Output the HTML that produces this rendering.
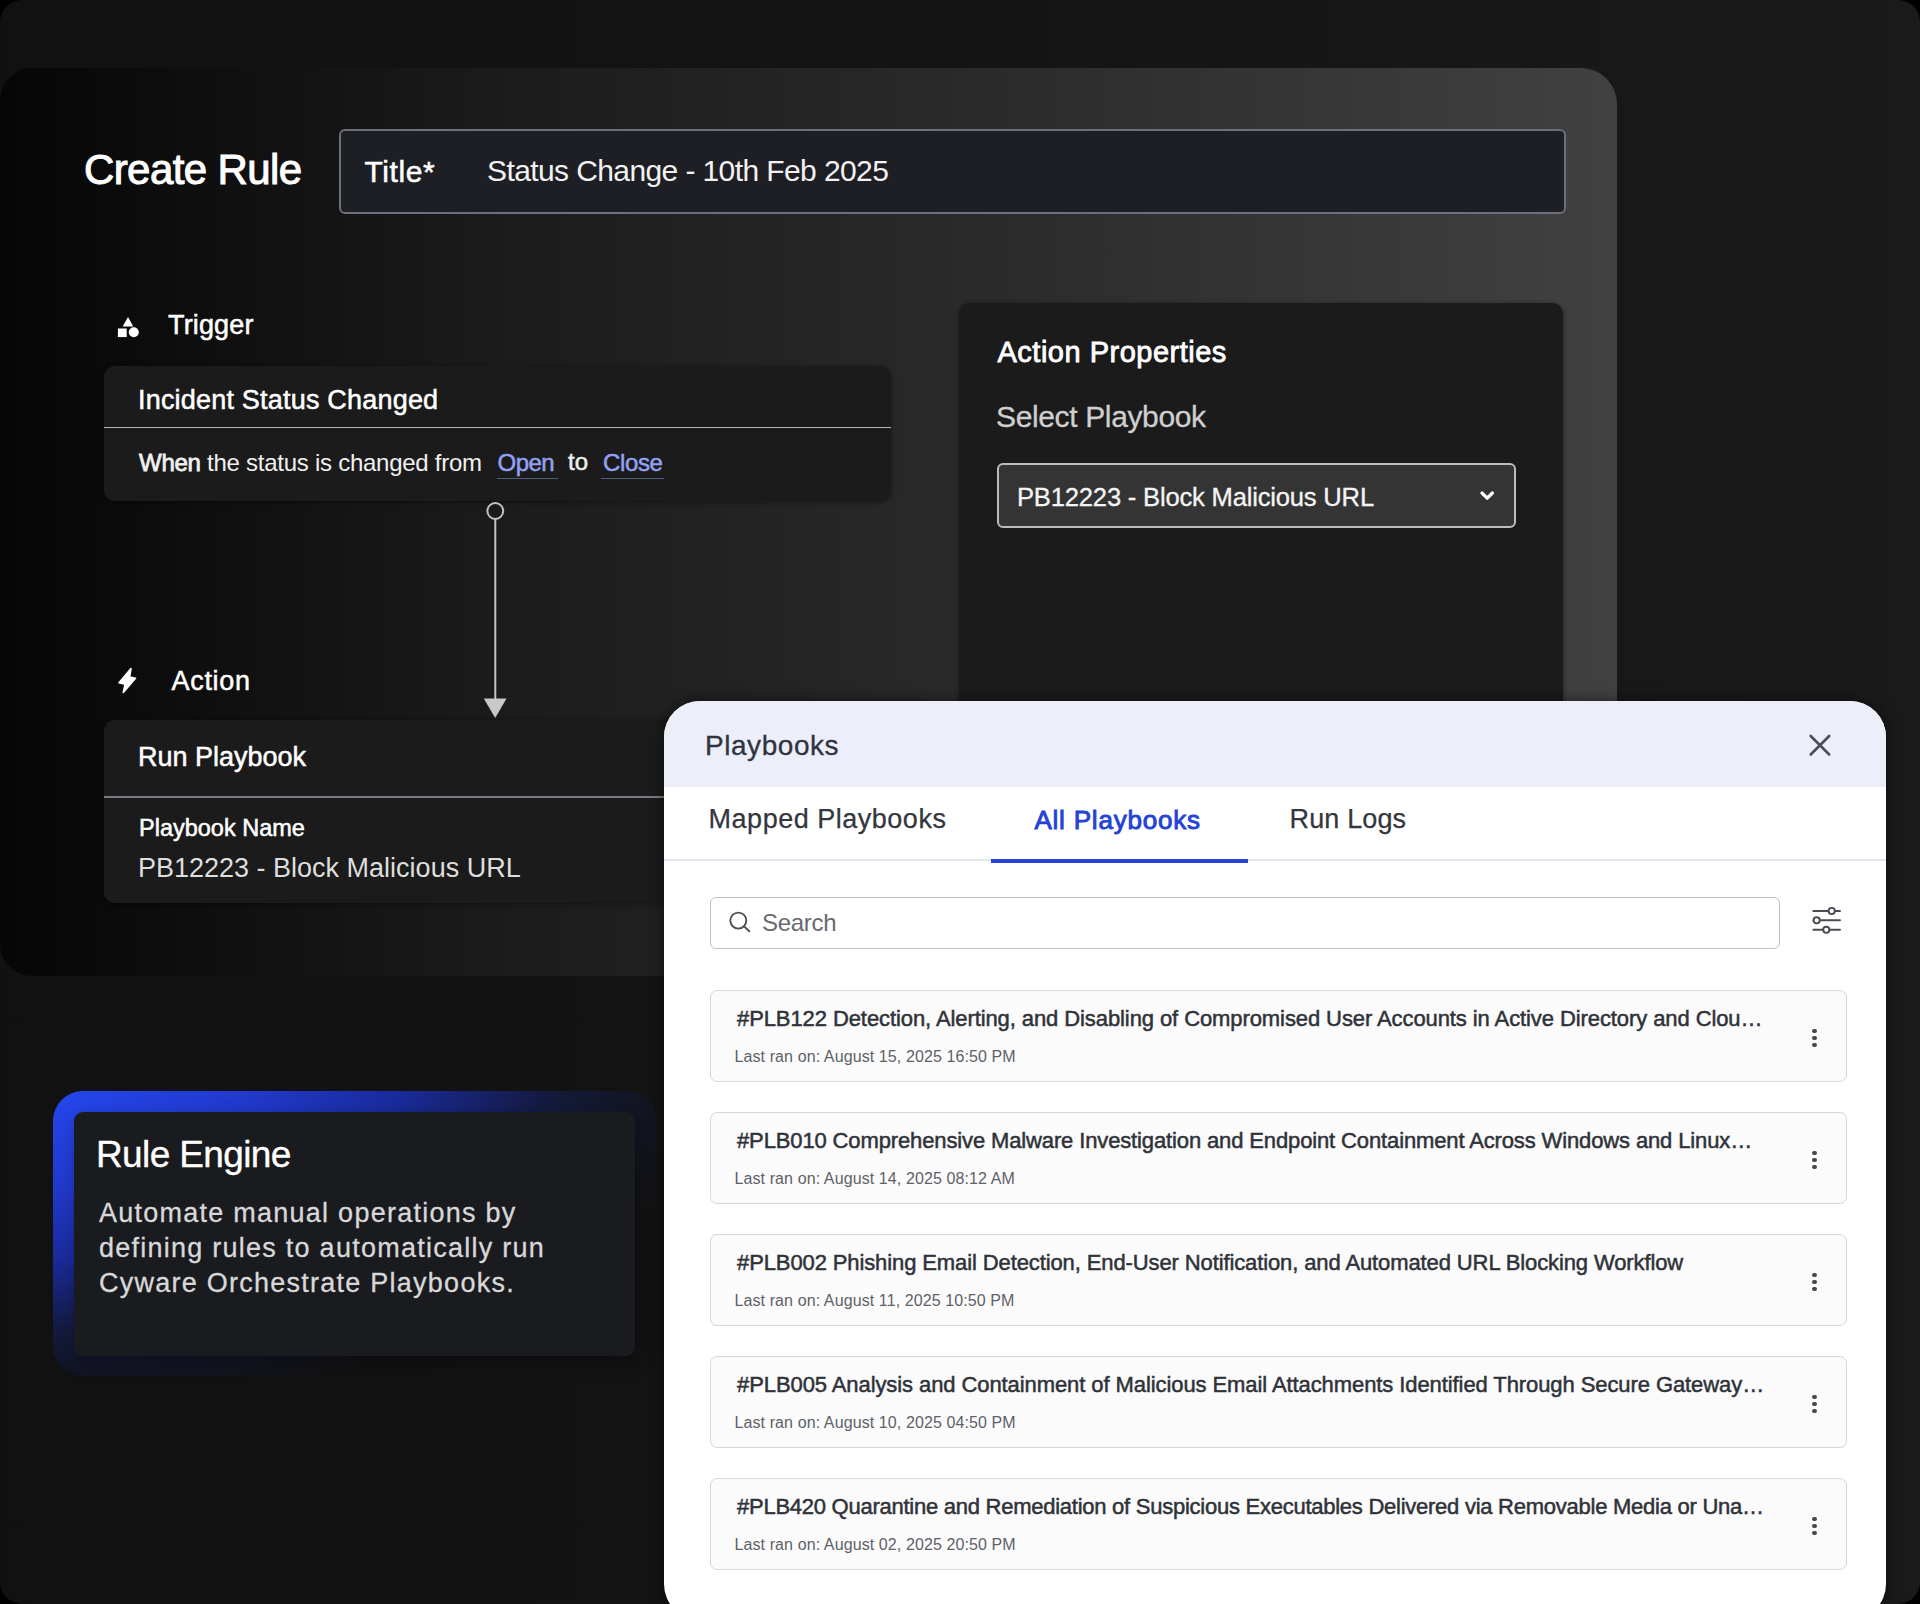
<!DOCTYPE html>
<html><head><meta charset="utf-8">
<style>
html,body{margin:0;padding:0;width:1920px;height:1604px;overflow:hidden;background:#000;}
*{box-sizing:border-box;}
body{font-family:"Liberation Sans",sans-serif;position:relative;}
.a{position:absolute;}
.t{position:absolute;white-space:nowrap;line-height:1;}
#bg{left:0;top:0;width:1920px;height:1604px;border-radius:22px;background:linear-gradient(90deg,#111111 0%,#141414 50%,#1a1a1a 100%);overflow:hidden;}
#main{left:0px;top:68px;width:1617px;height:908px;border-radius:32px 36px 36px 32px;background:linear-gradient(90deg,#060606 0%,#1c1c1c 32%,#2b2b2b 62%,#414141 100%);}
.med{-webkit-text-stroke:0.5px currentColor;}
.card{background:#1b1b1b;border-radius:11px;box-shadow:0 1px 5px rgba(0,0,0,0.45);}
.item{position:absolute;left:710px;width:1137px;height:92px;border:1.5px solid #d6d6db;border-radius:7px;background:#fbfbfc;}
.it{position:absolute;left:26px;top:17.6px;font-size:22px;letter-spacing:-0.09px;color:#2f3238;white-space:nowrap;line-height:1;}
.il{position:absolute;left:23.5px;top:58px;font-size:16px;letter-spacing:0.1px;color:#5f6167;white-space:nowrap;line-height:1;}
.kb{position:absolute;left:1101px;top:37px;width:5px;height:20px;}
.kb i{position:absolute;left:0.4px;width:4.3px;height:4.3px;border-radius:50%;background:#45474e;}
</style></head>
<body>
<div id="bg" class="a">
  <div id="main" class="a"></div>

  <!-- Create Rule title -->
  <div id="h1" class="t" style="left:84px;top:149.4px;font-size:42px;color:#fff;letter-spacing:-0.6px;-webkit-text-stroke:1px #fff;">Create Rule</div>

  <!-- Title input -->
  <div id="titlebox" class="a" style="left:339px;top:129px;width:1227px;height:85px;border:2.5px solid #6d707b;border-radius:6px;background:#1e1f24;"></div>
  <div id="tlabel" class="t med" style="left:364.5px;top:157px;font-size:30px;color:#fff;letter-spacing:0.6px;">Title*</div>
  <div id="tval" class="t" style="left:487px;top:156.3px;font-size:30px;color:#f2f2f2;letter-spacing:-0.6px;">Status Change - 10th Feb 2025</div>

  <!-- Trigger -->
  <svg class="a" style="left:112px;top:312px" width="30" height="30" viewBox="0 0 30 30">
    <polygon points="16,5 21.3,14.5 10.7,14.5" fill="#fff"/>
    <rect x="5.9" y="16.5" width="8.8" height="8.6" fill="#fff"/>
    <circle cx="21.8" cy="20.3" r="5" fill="#fff"/>
  </svg>
  <div id="trig" class="t med" style="left:168px;letter-spacing:0.15px;top:311.9px;font-size:27px;color:#fff;">Trigger</div>

  <div id="inc" class="a card" style="left:104px;top:366px;width:787px;height:135px;"></div>
  <div class="a" style="left:104px;top:426.5px;width:787px;height:1.8px;background:#b8b8b8;"></div>
  <div id="inct" class="t med" style="left:138px;top:386.5px;font-size:27px;letter-spacing:0.2px;color:#fff;">Incident Status Changed</div>
  <div id="when" class="t" style="left:139px;top:451.3px;font-size:24px;letter-spacing:-0.26px;color:#f0f0f0;"><span style="-webkit-text-stroke:0.8px #f0f0f0;">When</span> the status is changed from</div>
  <div id="open" class="t med" style="left:497.5px;top:450.8px;font-size:24px;letter-spacing:-0.5px;color:#93a1f3;">Open</div>
  <div class="a" style="left:497px;top:477.6px;width:61px;height:1.3px;background:#505b80;"></div>
  <div id="to" class="t med" style="left:568px;top:450.3px;font-size:24px;color:#f0f0f0;">to</div>
  <div id="close" class="t med" style="left:603px;top:450.8px;font-size:24px;letter-spacing:-0.35px;color:#93a1f3;">Close</div>
  <div class="a" style="left:601px;top:477.6px;width:63px;height:1.3px;background:#505b80;"></div>

  <!-- connector -->
  <svg class="a" style="left:470px;top:495px" width="50" height="230" viewBox="0 0 50 230">
    <circle cx="25.3" cy="16" r="7.9" fill="none" stroke="#c2c4ca" stroke-width="2"/>
    <line x1="25.3" y1="24" x2="25.3" y2="205" stroke="#c2c4ca" stroke-width="2"/>
    <polygon points="13.8,203.5 36.5,203.5 25.2,223" fill="#c8c8c8"/>
  </svg>

  <!-- Action -->
  <svg class="a" style="left:114px;top:664px" width="26" height="32" viewBox="0 0 26 32">
    <path d="M17 4.5 L5 18.8 L11 20.3 L9.3 28.5 L21.5 14.2 L15.6 13 Z" fill="#fff" stroke="#fff" stroke-width="1.6" stroke-linejoin="round"/>
  </svg>
  <div id="act" class="t med" style="left:171.5px;top:668px;font-size:27px;letter-spacing:0.7px;color:#fff;">Action</div>

  <div id="run" class="a card" style="left:104px;top:719.5px;width:787px;height:183px;"></div>
  <div class="a" style="left:104px;top:795.5px;width:787px;height:2px;background:#7a7a82;"></div>
  <div id="runt" class="t med" style="left:138px;top:744.1px;font-size:27px;color:#fff;">Run Playbook</div>
  <div id="pbn" class="t med" style="left:139px;top:816.6px;font-size:23.5px;letter-spacing:0px;color:#fff;">Playbook Name</div>
  <div id="pbv" class="t" style="left:138px;top:855px;font-size:27px;color:#dedede;">PB12223 - Block Malicious URL</div>

  <!-- Action properties -->
  <div id="ap" class="a card" style="left:959px;top:303px;width:604px;height:560px;"></div>
  <div id="apt" class="t med" style="left:997.5px;top:337.6px;font-size:29px;letter-spacing:0.5px;color:#fff;-webkit-text-stroke:0.8px #fff;">Action Properties</div>
  <div id="sp" class="t" style="left:996px;top:402.4px;letter-spacing:-0.36px;font-size:30px;color:#cfcfcf;-webkit-text-stroke:0.3px #cfcfcf;">Select Playbook</div>
  <div id="dd" class="a" style="left:997px;top:463px;width:519px;height:65px;border:2px solid #bcbcbc;border-radius:6px;background:#343434;"></div>
  <div id="ddt" class="t" style="-webkit-text-stroke:0.3px #f4f4f4;left:1017px;top:484.6px;font-size:25.6px;letter-spacing:-0.2px;color:#f4f4f4;">PB12223 - Block Malicious URL</div>
  <svg class="a" style="left:1477px;top:488px" width="20" height="16" viewBox="0 0 20 16">
    <polyline points="5,5 10.2,10.2 15.4,5" fill="none" stroke="#fff" stroke-width="3.3" stroke-linecap="round" stroke-linejoin="round"/>
  </svg>

  <!-- Rule Engine card -->
  <div id="reframe" class="a" style="left:53px;top:1091px;width:604px;height:285px;border-radius:30px;background:radial-gradient(ellipse 660px 320px at 0 0,#2547ee 0%,#2139cc 30%,#1a2b9c 52%,rgba(20,30,85,0.6) 76%,rgba(17,17,20,0) 98%);"></div>
  <div id="recard" class="a" style="left:74px;top:1112px;width:561px;height:244px;border-radius:9px;background:#1a1b1e;box-shadow:4px 6px 18px rgba(0,0,0,0.35);"></div>
  <div id="ret" class="t med" style="-webkit-text-stroke:0.35px #fff;left:96px;top:1135.5px;font-size:37px;letter-spacing:-0.62px;color:#fff;">Rule Engine</div>
  <div id="reb" class="a" style="left:99px;top:1196px;font-size:27px;line-height:35px;letter-spacing:1.25px;color:#d8d8da;white-space:nowrap;-webkit-text-stroke:0.3px #d8d8da;">Automate manual operations by<br>defining rules to automatically run<br>Cyware Orchestrate Playbooks.</div>

  <!-- Playbooks panel -->
  <div id="panel" class="a" style="left:664px;top:701px;width:1222px;height:919px;border-radius:36px;background:#fff;overflow:hidden;box-shadow:0 0 14px rgba(0,0,0,0.55);">
    <div class="a" style="left:0;top:0;width:1222px;height:86px;background:#eceef9;"></div>
  </div>
  <div id="pbt" class="t" style="-webkit-text-stroke:0.3px #2f3440;left:705px;letter-spacing:0.55px;top:731.9px;font-size:28px;color:#2f3440;">Playbooks</div>
  <svg class="a" style="left:1800px;top:725px" width="40" height="40" viewBox="0 0 40 40">
    <path d="M10.7 11 L29.2 29.5 M29.2 11 L10.7 29.5" stroke="#4a4d57" stroke-width="2.6" stroke-linecap="round"/>
  </svg>
  <div id="tab1" class="t" style="-webkit-text-stroke:0.25px #33363d;left:708.6px;letter-spacing:0.51px;top:806.2px;font-size:27px;color:#33363d;">Mapped Playbooks</div>
  <div id="tab2" class="t" style="-webkit-text-stroke:0.9px #2343d8;left:1034.4px;letter-spacing:0.8px;top:807.3px;font-size:26px;color:#2343d8;">All Playbooks</div>
  <div id="tab3" class="t" style="-webkit-text-stroke:0.25px #33363d;left:1289.6px;letter-spacing:0.13px;top:806.2px;font-size:27px;color:#33363d;">Run Logs</div>
  <div class="a" style="left:664px;top:858.5px;width:1222px;height:2px;background:#e0e3f1;"></div>
  <div class="a" style="left:991px;top:859px;width:257px;height:4px;background:#2343d8;"></div>

  <div id="search" class="a" style="left:710px;top:897px;width:1070px;height:52px;border:1.8px solid #c0c0cc;border-radius:6px;background:#fff;"></div>
  <svg class="a" style="left:724px;top:906px" width="32" height="32" viewBox="0 0 32 32">
    <circle cx="14.3" cy="14.6" r="8" fill="none" stroke="#4f5157" stroke-width="1.9"/>
    <line x1="20.2" y1="20.5" x2="25.3" y2="25.3" stroke="#4f5157" stroke-width="1.9" stroke-linecap="round"/>
  </svg>
  <div id="srch" class="t" style="left:762px;letter-spacing:-0.3px;top:911px;font-size:24px;color:#696a70;">Search</div>
  <svg class="a" style="left:1806px;top:900px" width="40" height="40" viewBox="0 0 40 40">
    <g stroke="#4a4b53" stroke-width="1.9" fill="none" stroke-linecap="round">
      <line x1="7.3" y1="11" x2="34" y2="11"/>
      <line x1="7.3" y1="20.3" x2="34" y2="20.3"/>
      <line x1="7.3" y1="29.8" x2="34" y2="29.8"/>
    </g>
    <g stroke="#4a4b53" stroke-width="1.9" fill="#fff">
      <circle cx="25.7" cy="11" r="3.1"/>
      <circle cx="10.7" cy="20.3" r="3.1"/>
      <circle cx="20.3" cy="29.8" r="3.1"/>
    </g>
  </svg>

  <div class="item" style="top:989.5px;"><div id="i1" class="it med">#PLB122 Detection, Alerting, and Disabling of Compromised User Accounts in Active Directory and Clou…</div><div id="l1" class="il">Last ran on: August 15, 2025 16:50 PM</div><div class="kb"><i style="top:1px"></i><i style="top:8.3px"></i><i style="top:15.6px"></i></div></div>
  <div class="item" style="top:1111.5px;"><div id="i2" class="it med" style="letter-spacing:-0.13px">#PLB010 Comprehensive Malware Investigation and Endpoint Containment Across Windows and Linux…</div><div id="l2" class="il">Last ran on: August 14, 2025 08:12 AM</div><div class="kb"><i style="top:1px"></i><i style="top:8.3px"></i><i style="top:15.6px"></i></div></div>
  <div class="item" style="top:1233.5px;"><div id="i3" class="it med" style="letter-spacing:-0.11px">#PLB002 Phishing Email Detection, End-User Notification, and Automated URL Blocking Workflow</div><div id="l3" class="il">Last ran on: August 11, 2025 10:50 PM</div><div class="kb"><i style="top:1px"></i><i style="top:8.3px"></i><i style="top:15.6px"></i></div></div>
  <div class="item" style="top:1355.5px;"><div id="i4" class="it med" style="letter-spacing:-0.085px">#PLB005 Analysis and Containment of Malicious Email Attachments Identified Through Secure Gateway…</div><div id="l4" class="il">Last ran on: August 10, 2025 04:50 PM</div><div class="kb"><i style="top:1px"></i><i style="top:8.3px"></i><i style="top:15.6px"></i></div></div>
  <div class="item" style="top:1477.5px;"><div id="i5" class="it med" style="letter-spacing:-0.255px">#PLB420 Quarantine and Remediation of Suspicious Executables Delivered via Removable Media or Una…</div><div id="l5" class="il">Last ran on: August 02, 2025 20:50 PM</div><div class="kb"><i style="top:1px"></i><i style="top:8.3px"></i><i style="top:15.6px"></i></div></div>
</div>
</body></html>
